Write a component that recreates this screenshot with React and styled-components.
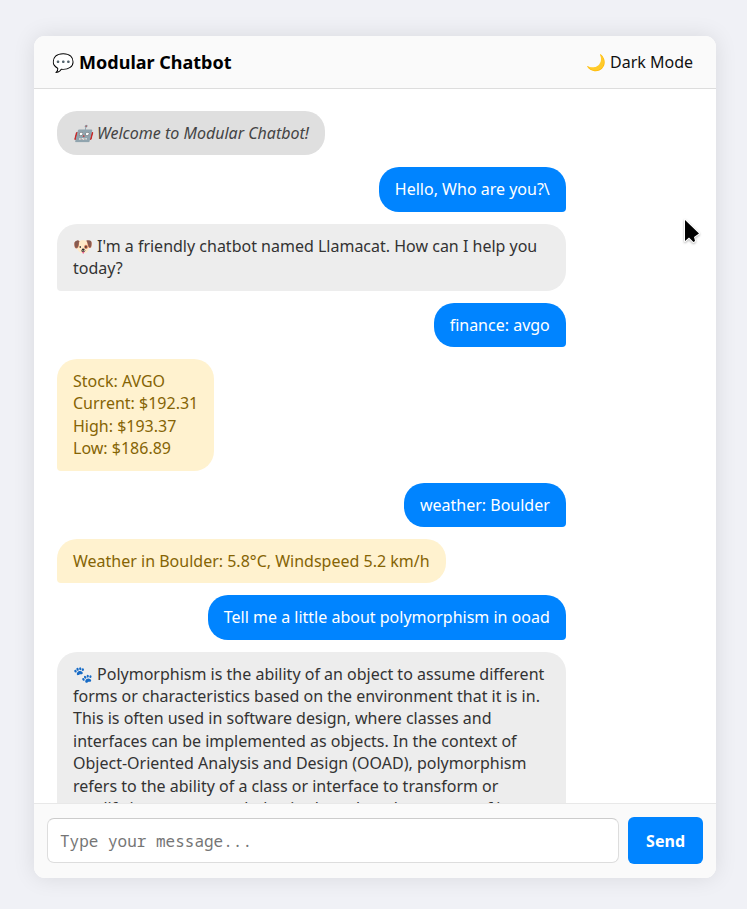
import React, { useState } from "react";
import styled, { createGlobalStyle, css } from "styled-components";

const GlobalStyle = createGlobalStyle`
  *, *::before, *::after { box-sizing: border-box; }
  body {
    margin: 0;
    background: #f0f1f6;
    color: #000;
    font-family: "Noto Sans", "Noto Color Emoji", sans-serif;
    font-size: 16px;
  }
`;

const Page = styled.div`
  display: flex;
  height: 100vh;
  padding: 36px 31px 31px 34px;
`;

const Card = styled.main`
  display: flex;
  flex: 1;
  flex-direction: column;
  min-width: 0;
  overflow: hidden;
  background: #fff;
  border-radius: 11px;
  box-shadow: 0 0 22px rgba(0, 0, 0, 0.1);
`;

const Header = styled.header`
  display: flex;
  align-items: center;
  justify-content: space-between;
  padding: 14px 23px 14px 18px;
  background: #fafafa;
  border-bottom: 1px solid #ddd;
`;

const Title = styled.h1`
  margin: 0;
  font-size: 18px;
  line-height: 24px;
  font-weight: 700;
`;

const ThemeButton = styled.button`
  padding: 0;
  border: 0;
  background: none;
  color: #111;
  font: inherit;
  line-height: 24px;
  cursor: pointer;
`;

const Messages = styled.section`
  flex: 1;
  min-height: 0;
  overflow: hidden;
  padding: 22px 23px;
`;

const MessageList = styled.ul`
  display: flex;
  flex-direction: column;
  align-items: flex-start;
  gap: 12px;
  width: 80%;
  margin: 0;
  padding: 0;
  list-style: none;
`;

const variants = {
  system: css`
    background: #dfdfdf;
    color: #444;
    font-style: italic;
  `,
  user: css`
    align-self: flex-end;
    background: #0084ff;
    color: #fff;
    border-bottom-right-radius: 4px;
  `,
  bot: css`
    background: #ededed;
    color: #333;
    border-bottom-left-radius: 4px;
  `,
  data: css`
    background: #fff2cf;
    color: #856404;
    border-bottom-left-radius: 4px;
  `,
};

const Bubble = styled.li`
  flex-shrink: 0;
  max-width: 100%;
  padding: 11px 16px;
  border-radius: 20px;
  line-height: 1.4;
  white-space: pre-line;
  ${({ $kind }) => variants[$kind]}
`;

const Composer = styled.form`
  display: flex;
  align-items: center;
  gap: 9px;
  padding: 13px 13px 14px;
  background: #fafafa;
  border-top: 1px solid #e8e8e8;
`;

const MessageInput = styled.input`
  flex: 1;
  min-width: 0;
  height: 45px;
  padding: 0 12px;
  border: 1px solid #ddd;
  border-top-color: #ccc;
  border-radius: 7px;
  background: #fff;
  font-family: "Noto Sans Mono", "Liberation Mono", monospace;
  font-size: 16px;
  &::placeholder { color: #757575; opacity: 1; }
`;

const SendButton = styled.button`
  height: 47px;
  padding: 0 18px;
  border: 0;
  border-radius: 6px;
  background: #0084ff;
  color: #fff;
  font: inherit;
  font-weight: 700;
  font-size: 16px;
  cursor: pointer;
`;

const Pointer = styled.svg`
  position: fixed;
  top: 218px;
  right: 44px;
  width: 20px;
  height: 28px;
  pointer-events: none;
  filter: drop-shadow(0 1px 1px rgba(0, 0, 0, 0.3));
`;

const messages = [
  { kind: "system", text: "🤖 Welcome to Modular Chatbot!" },
  { kind: "user", text: "Hello, Who are you?\\" },
  { kind: "bot", text: "🐶 I'm a friendly chatbot named Llamacat. How can I help you today?" },
  { kind: "user", text: "finance: avgo" },
  { kind: "data", text: "Stock: AVGO\nCurrent: $192.31\nHigh: $193.37\nLow: $186.89" },
  { kind: "user", text: "weather: Boulder" },
  { kind: "data", text: "Weather in Boulder: 5.8°C, Windspeed 5.2 km/h" },
  { kind: "user", text: "Tell me a little about polymorphism in ooad" },
  {
    kind: "bot",
    text: "🐾 Polymorphism is the ability of an object to assume different forms or characteristics based on the environment that it is in. This is often used in software design, where classes and interfaces can be implemented as objects. In the context of Object-Oriented Analysis and Design (OOAD), polymorphism refers to the ability of a class or interface to transform or modify its structure or behavior based on the context of its use.",
  },
];

export default function App() {
  const [draft, setDraft] = useState("");
  return (
    <Page>
      <GlobalStyle />
      <Card>
        <Header>
          <Title>💬 Modular Chatbot</Title>
          <ThemeButton type="button">🌙 Dark Mode</ThemeButton>
        </Header>
        <Messages>
          <MessageList>
            {messages.map((m, i) => (
              <Bubble key={i} $kind={m.kind}>{m.text}</Bubble>
            ))}
          </MessageList>
        </Messages>
        <Composer onSubmit={(e) => e.preventDefault()}>
          <MessageInput
            aria-label="Message"
            placeholder="Type your message..."
            value={draft}
            onChange={(e) => setDraft(e.target.value)}
          />
          <SendButton type="submit">Send</SendButton>
        </Composer>
      </Card>
      <Pointer viewBox="0 0 20 28" aria-hidden="true">
        <path
          d="M2 2 V23 L6 19.500 L10.500 24 L12 23 L11 19 L16 15.500 Z"
          fill="#000"
          stroke="#fff"
          strokeWidth="2"
          strokeLinejoin="round"
          paintOrder="stroke"
        />
      </Pointer>
    </Page>
  );
}
